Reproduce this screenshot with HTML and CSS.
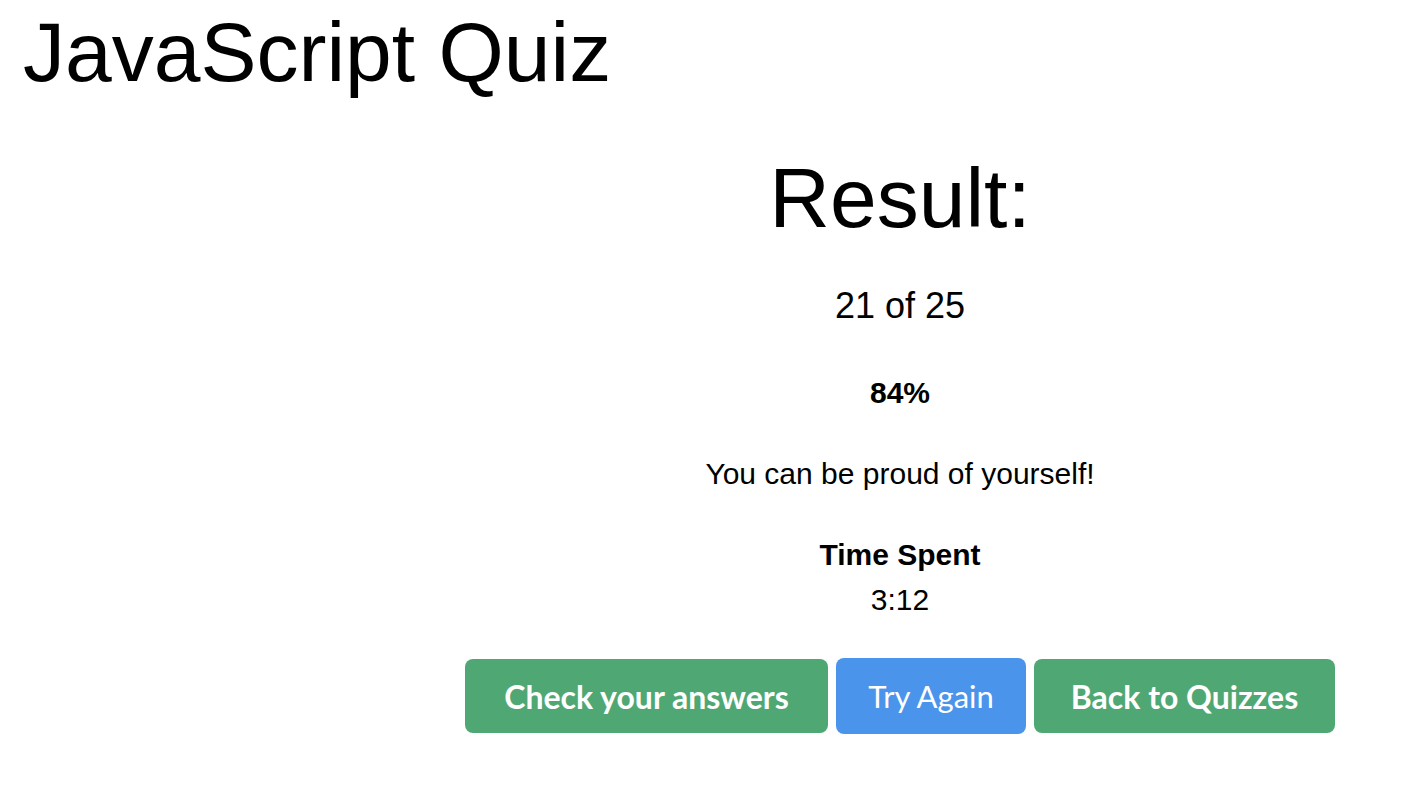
FILE: index.html
```html
<!DOCTYPE html>
<html lang="en">
<head>
<meta charset="utf-8">
<title>JavaScript Quiz</title>
<link rel="stylesheet" href="styles.css">
</head>
<body>
<h1 class="title">JavaScript Quiz</h1>
<main class="result">
  <h2 class="result-heading">Result:</h2>
  <p class="score">21 of 25</p>
  <p class="percent">84%</p>
  <p class="message">You can be proud of yourself!</p>
  <p class="time-label">Time Spent</p>
  <p class="time-value">3:12</p>
  <div class="actions">
    <a class="btn btn-green btn-check" href="#">Check your answers</a>
    <button class="btn btn-blue" type="button">Try Again</button>
    <a class="btn btn-green btn-back" href="#">Back to Quizzes</a>
  </div>
</main>
</body>
</html>
```

FILE: styles.css
```css
html, body {
  background: #ffffff;
}
body {
  margin: 8px;
  font-family: "Liberation Sans", Arial, sans-serif;
  color: #000000;
}
.title {
  margin: 2px 0 0 0;
  padding-left: 15px;
  font-size: 84px;
  font-weight: 400;
  line-height: 1;
}
.result {
  margin-left: 372px;
  display: flex;
  flex-direction: column;
  align-items: center;
  text-align: center;
}
.result p {
  margin: 0;
}
.result-heading {
  margin: 62px 0 0 0;
  font-size: 84px;
  font-weight: 400;
  line-height: 1;
}
.score {
  margin-top: 48px !important;
  font-size: 36px;
  line-height: 1;
}
.percent {
  margin-top: 54px !important;
  font-size: 30px;
  font-weight: 700;
  line-height: 1;
}
.message {
  margin-top: 51px !important;
  font-size: 30px;
  line-height: 1;
}
.time-label {
  margin-top: 51px !important;
  font-size: 30px;
  font-weight: 700;
  line-height: 1;
}
.time-value {
  margin-top: 15px !important;
  font-size: 30px;
  line-height: 1;
}
.actions {
  margin-top: 43px;
  display: flex;
  align-items: center;
  gap: 8px;
}
.btn {
  display: flex;
  align-items: center;
  justify-content: center;
  box-sizing: border-box;
  height: 74px;
  border: 0;
  border-radius: 8px;
  color: #ffffff;
  text-decoration: none;
  font-family: Lato, "Open Sans", sans-serif;
  font-size: 32px;
  cursor: pointer;
}
.btn-green {
  background: #4fa874;
  font-weight: 700;
}
.btn-check {
  padding: 0 39px;
}
.btn-back {
  padding: 0 36.5px;
}
.btn-blue {
  background: #4a94ec;
  height: 76px;
  font-weight: 400;
  font-size: 31px;
  padding: 0 32.5px;
}
```
